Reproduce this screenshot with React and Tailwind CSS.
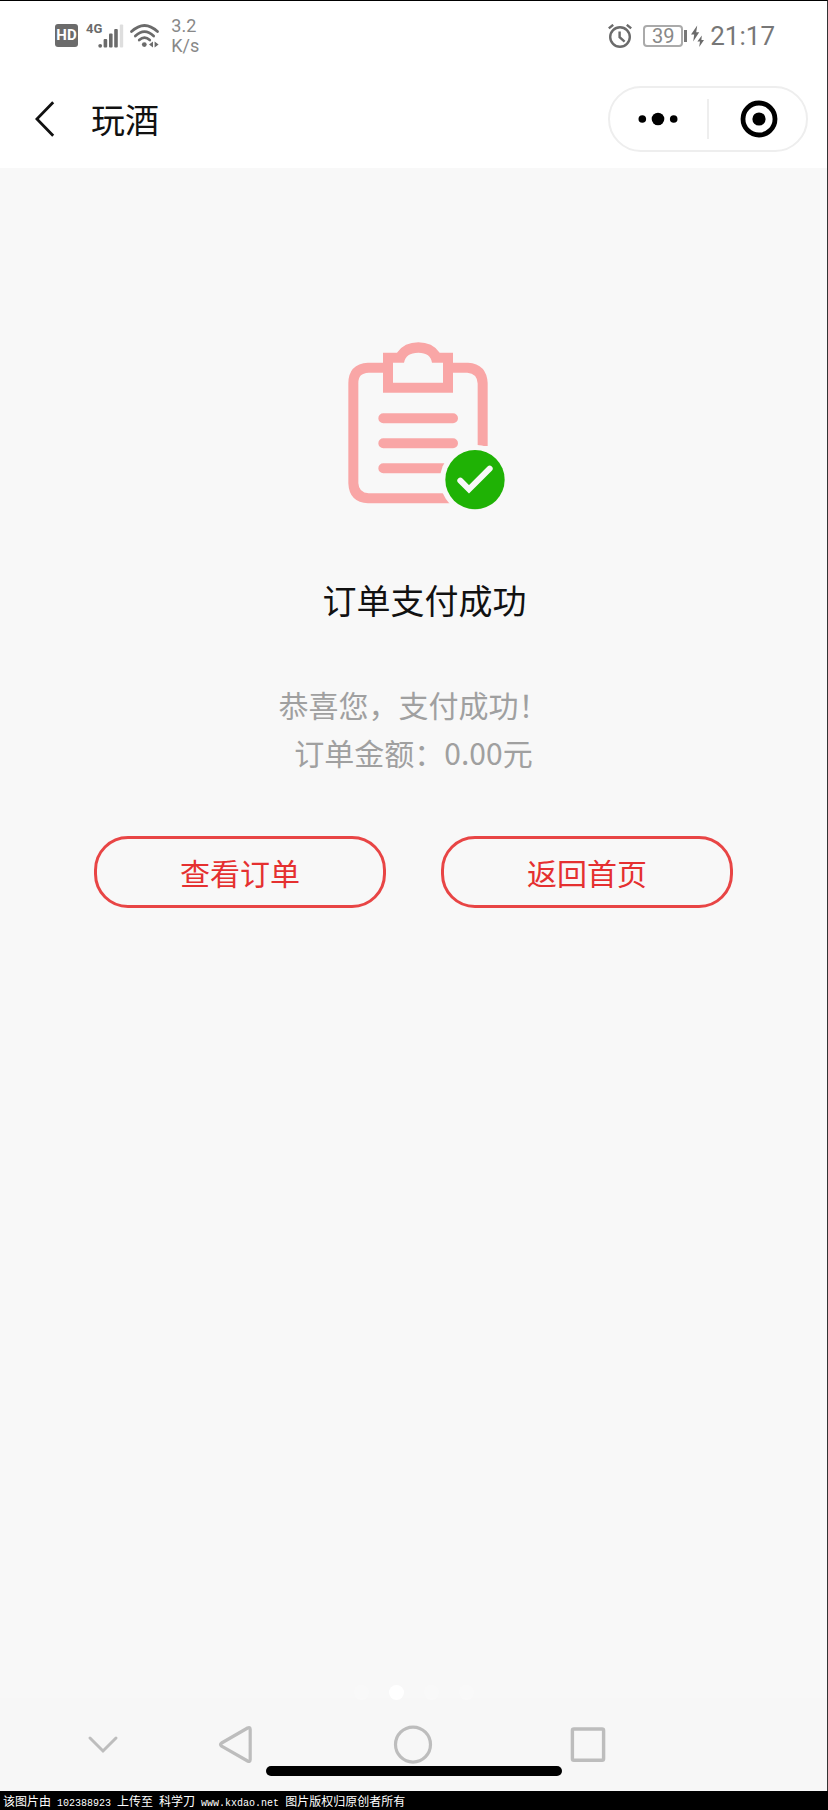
function StatusBar() {
  return (
    <div className="flex h-[69px] items-center justify-between pr-[52px] pl-[55px] font-['Roboto',sans-serif] text-[#6b6b6b]">
      <div className="flex items-center">
        <span className="flex h-[23px] w-[23px] items-center justify-center rounded-[3px] bg-[#6b6b6b] text-[15px] leading-none font-bold text-white">
          HD
        </span>

        {/* Mobile signal */}
        <span className="ml-2 self-start pt-[6px] text-[13px] leading-none font-bold">4G</span>
        <svg width="26" height="24" viewBox="0 0 26 24" className="-ml-1">
          <g fill="#6b6b6b">
            <circle cx="2.2" cy="21.8" r="1.9" />
            <rect x="5.6" y="15" width="3.6" height="8.6" rx="1" />
            <rect x="11" y="9.5" width="3.6" height="14.1" rx="1" />
            <rect x="16.2" y="5" width="3.6" height="18.6" rx="1" />
          </g>
          <rect x="21.8" y="0.5" width="3.4" height="23.1" rx="1" fill="#dedede" />
        </svg>

        {/* Wifi */}
        <svg width="29" height="24" viewBox="0 0 29 24" className="ml-[6px]">
          <g fill="none" stroke="#6b6b6b" strokeWidth="2.7" strokeLinecap="round">
            <path d="M1.5 7.6Q14.5 -4.6 27.5 7.6" />
            <path d="M5.3 12Q14.5 3.4 23.7 12" />
            <path d="M9.2 16Q14.5 11.4 19.8 16" />
          </g>
          <circle cx="14.3" cy="20.6" r="2.4" fill="#6b6b6b" />
          <path d="M23 17.4v6.2l-4-3.1zM24.6 17.4v6.2l4-3.1z" fill="#6b6b6b" />
        </svg>

        <div className="ml-3 text-[18px] leading-5 text-[#888]">
          <div>3.2</div>
          <div>K/s</div>
        </div>
      </div>

      <div className="flex items-center">
        {/* Alarm */}
        <svg width="24" height="24" viewBox="0 0 24 24" fill="none" stroke="#6b6b6b" strokeWidth="2.4">
          <circle cx="12" cy="13" r="9.8" />
          <path d="M11.6 7.4v5.8l5 4.4" />
          <path d="M0.8 4.4L5.2 0.8M23.2 4.4L18.8 0.8" />
        </svg>

        {/* Battery */}
        <span className="ml-[11px] flex h-[22px] w-10 items-center justify-center rounded-[4px] border-2 border-[#aaa] text-[20px] leading-none text-[#888]">
          39
        </span>
        <span className="ml-px h-3 w-[3px] bg-[#777]" />
        <svg width="13" height="22" viewBox="0 0 13 22" fill="#6b6b6b" className="ml-1">
          <path d="M6.2 0.6L0 9.6h3.2L2.2 16.4L8.2 7.2H5.2z" />
          <path d="M10.8 10.6L6.4 16.4h2.6L8.2 22L13 15H10.4z" />
        </svg>

        <span className="ml-[6px] text-[26px] leading-none text-[#777]">21:17</span>
      </div>
    </div>
  );
}

function Header() {
  return (
    <header className="flex h-[98px] items-center justify-between pr-[19px] pl-[35px]">
      <div className="flex items-center">
        <button aria-label="返回">
          <svg width="20" height="36" viewBox="0 0 20 36" fill="none" stroke="#111" strokeWidth="2.8">
            <path d="M18.2 1.2L1.9 18L18.2 34.8" />
          </svg>
        </button>
        <h1 className="ml-9 text-[34px] leading-[48px] text-[#111]">玩酒</h1>
      </div>

      <div className="flex h-[66px] w-[200px] items-center rounded-full border-2 border-[#eee]">
        <button aria-label="更多" className="flex flex-1 justify-center pr-[2px]">
          <svg width="40" height="14" viewBox="0 0 40 14">
            <circle cx="4.3" cy="7" r="3.8" />
            <circle cx="20" cy="7" r="6.3" />
            <circle cx="35.7" cy="7" r="3.8" />
          </svg>
        </button>
        <span className="h-10 w-[2px] bg-[#eee]" />
        <button aria-label="关闭" className="flex flex-1 justify-center pl-[2px]">
          <svg width="38" height="38" viewBox="0 0 38 38">
            <circle cx="19" cy="19" r="16" fill="none" stroke="#000" strokeWidth="4.8" />
            <circle cx="19" cy="19" r="6.6" />
          </svg>
        </button>
      </div>
    </header>
  );
}

function OrderIcon() {
  return (
    <svg width="160" height="168" viewBox="76 66 480 504">
      <g fill="none" stroke="#f9a6a6" strokeWidth="30">
        <path d="M205 143H146Q101 146 101 190V490Q103 533 146 535H420" />
        <path d="M385 143H444Q487 146 489 190V378" />
        <path d="M191 295H400M191 370H400M191 445H400" strokeLinecap="round" />
      </g>
      <path
        fillRule="evenodd"
        fill="#f9a6a6"
        d="M190 98H232Q254 67 296 67Q338 67 360 98H400V218H190ZM220 128V188H370V128H337Q333 98 296 98Q258 98 253 128Z"
      />
      <circle cx="466" cy="479" r="105" fill="#f8f8f8" />
      <circle cx="466" cy="479" r="89" fill="#1fb205" />
      <path d="M422 482L448 508L510 446" fill="none" stroke="#f8f8f8" strokeWidth="18" strokeLinecap="round" />
    </svg>
  );
}

function ActionButton({ children }) {
  return (
    <button className="h-[72px] flex-1 rounded-[34px] border-3 border-[#e84545] text-[30px] leading-none text-[#e53030]">
      {children}
    </button>
  );
}

function NavBar() {
  return (
    <nav className="relative grid h-[93px] grid-cols-[155fr_114fr_237fr_113fr_182fr] items-center justify-items-center bg-[#f7f7f7] pl-[25px]">
      {/* Page dots */}
      <div className="absolute inset-x-0 -top-[13px] flex justify-center gap-5">
        <span className="h-[15px] w-[15px] rounded-full bg-[#f9f9f9]" />
        <span className="h-[15px] w-[15px] rounded-full bg-white" />
        <span className="h-[15px] w-[15px] rounded-full bg-[#f9f9f9]" />
        <span className="h-[15px] w-[15px] rounded-full bg-[#f9f9f9]" />
      </div>

      <button aria-label="收起">
        <svg width="40" height="40" viewBox="0 0 40 40" fill="none" stroke="#bdbdbd" strokeWidth="3" strokeLinecap="round">
          <path d="M7 13L20 26L33 13" />
        </svg>
      </button>
      <button aria-label="后退">
        <svg width="40" height="40" viewBox="0 0 40 40" fill="none" stroke="#bdbdbd" strokeWidth="3.2" strokeLinejoin="round">
          <path d="M30.6 3Q33.2 1.8 33.2 4.4V34.6Q33.2 37.4 30.6 36L4.6 21.2Q2.4 19.6 4.6 18Z" />
        </svg>
      </button>
      <button aria-label="主页">
        <svg width="40" height="40" viewBox="0 0 40 40" fill="none" stroke="#bdbdbd" strokeWidth="3.2">
          <circle cx="20" cy="19.6" r="17.5" />
        </svg>
      </button>
      <button aria-label="最近任务">
        <svg width="40" height="40" viewBox="0 0 40 40" fill="none" stroke="#bdbdbd" strokeWidth="3.4">
          <rect x="4.4" y="4" width="31.2" height="31.2" rx="1.5" />
        </svg>
      </button>

      <span className="absolute bottom-[15px] left-1/2 h-[10px] w-[296px] -translate-x-1/2 rounded-full bg-black" />
    </nav>
  );
}

export default function App() {
  return (
    <div className="flex min-h-screen flex-col bg-black font-['Noto_Sans_CJK_SC',sans-serif]">
      <div className="flex flex-1 flex-col border-t border-r border-t-black border-r-[#333] bg-white">
        <StatusBar />
        <Header />

        <main className="flex flex-1 flex-col items-center bg-[#f8f8f8] pt-[174px]">
          <div className="flex flex-col items-center pl-[22px]">
            <OrderIcon />
            <h2 className="mt-[66px] text-[34px] leading-[48px] text-[#111]">订单支付成功</h2>
          </div>

          <div className="mt-14 text-center text-[30px] leading-[48px] text-[#a0a0a0]">
            <p>恭喜您，支付成功！</p>
            <p>订单金额：0.00元</p>
          </div>

          <div className="mt-15 flex w-full gap-[55px] px-[94px]">
            <ActionButton>查看订单</ActionButton>
            <ActionButton>返回首页</ActionButton>
          </div>
        </main>

        <NavBar />
      </div>

      <footer className="h-[19px] px-[3px] font-['Liberation_Mono',monospace] text-[10px] leading-[19px] whitespace-nowrap text-white">
        <span className="font-['Noto_Sans_CJK_SC',sans-serif] text-[12px]">该图片由</span> 102388923{" "}
        <span className="font-['Noto_Sans_CJK_SC',sans-serif] text-[12px]">上传至</span>{" "}
        <span className="font-['Noto_Sans_CJK_SC',sans-serif] text-[12px]">科学刀</span> www.kxdao.net{" "}
        <span className="font-['Noto_Sans_CJK_SC',sans-serif] text-[12px]">图片版权归原创者所有</span>
      </footer>
    </div>
  );
}
